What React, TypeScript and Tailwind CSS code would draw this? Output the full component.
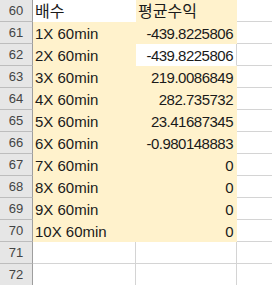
const rows: { n: number; a: string; b: string; fillA: boolean; fillB: boolean }[] = [
  { n: 60, a: '배수', b: '평균수익', fillA: false, fillB: true },
  { n: 61, a: '1X 60min', b: '-439.8225806', fillA: true, fillB: true },
  { n: 62, a: '2X 60min', b: '-439.8225806', fillA: true, fillB: false },
  { n: 63, a: '3X 60min', b: '219.0086849', fillA: true, fillB: true },
  { n: 64, a: '4X 60min', b: '282.735732', fillA: true, fillB: true },
  { n: 65, a: '5X 60min', b: '23.41687345', fillA: true, fillB: true },
  { n: 66, a: '6X 60min', b: '-0.980148883', fillA: true, fillB: true },
  { n: 67, a: '7X 60min', b: '0', fillA: true, fillB: true },
  { n: 68, a: '8X 60min', b: '0', fillA: true, fillB: true },
  { n: 69, a: '9X 60min', b: '0', fillA: true, fillB: true },
  { n: 70, a: '10X 60min', b: '0', fillA: true, fillB: true },
  { n: 71, a: '', b: '', fillA: false, fillB: false },
  { n: 72, a: '', b: '', fillA: false, fillB: false },
]

const font = { fontFamily: '"Liberation Sans", "Noto Sans CJK KR", sans-serif' }

export default function App() {
  return (
    <div className="w-[272px] h-[285px] overflow-hidden bg-white text-[#1a1a1a]" style={font}>
      {rows.map((r, i) => {
        const next = rows[i + 1]
        // gridline only shows where both neighbouring cells are unfilled
        const aRight = !r.fillA && !r.fillB
        const aBottom = !r.fillA && (!next || !next.fillA)
        const bRight = !r.fillB
        const bBottom = !r.fillB && (!next || !next.fillB)
        const header = i === 0
        return (
          <div key={r.n} className="flex h-[22px]">
            <div className="w-[33px] shrink-0 bg-[#e6e6e6] border-r border-b border-r-[#9e9e9e] border-b-[#bdbdbd] flex items-center justify-center pt-[1px] text-[13px] text-[#444]">
              {r.n}
            </div>
            <div
              className={`w-[103px] shrink-0 pl-[2px] pt-[2px] whitespace-nowrap ${header ? 'text-[16px] leading-[19px]' : 'text-[15px] leading-[20px]'} ${r.fillA ? 'bg-[#fff2cc]' : 'bg-white'} ${aRight ? 'border-r border-r-[#d4d4d4]' : 'border-r border-r-transparent'} ${aBottom ? 'border-b border-b-[#d4d4d4]' : 'border-b border-b-transparent'}`}
            >
              {r.a}
            </div>
            <div
              className={`w-[101px] shrink-0 pr-[3px] pt-[2px] whitespace-nowrap ${header ? 'pl-[2px] text-left text-[16px] leading-[19px]' : 'text-right text-[15px] leading-[20px] tracking-[-0.5px]'} ${r.fillB ? 'bg-[#fff2cc]' : 'bg-white'} ${bRight ? 'border-r border-r-[#d4d4d4]' : 'border-r border-r-transparent'} ${bBottom ? 'border-b border-b-[#d4d4d4]' : 'border-b border-b-transparent'}`}
            >
              {r.b}
            </div>
            <div className="flex-1 border-b border-b-[#d4d4d4]" />
          </div>
        )
      })}
    </div>
  )
}
